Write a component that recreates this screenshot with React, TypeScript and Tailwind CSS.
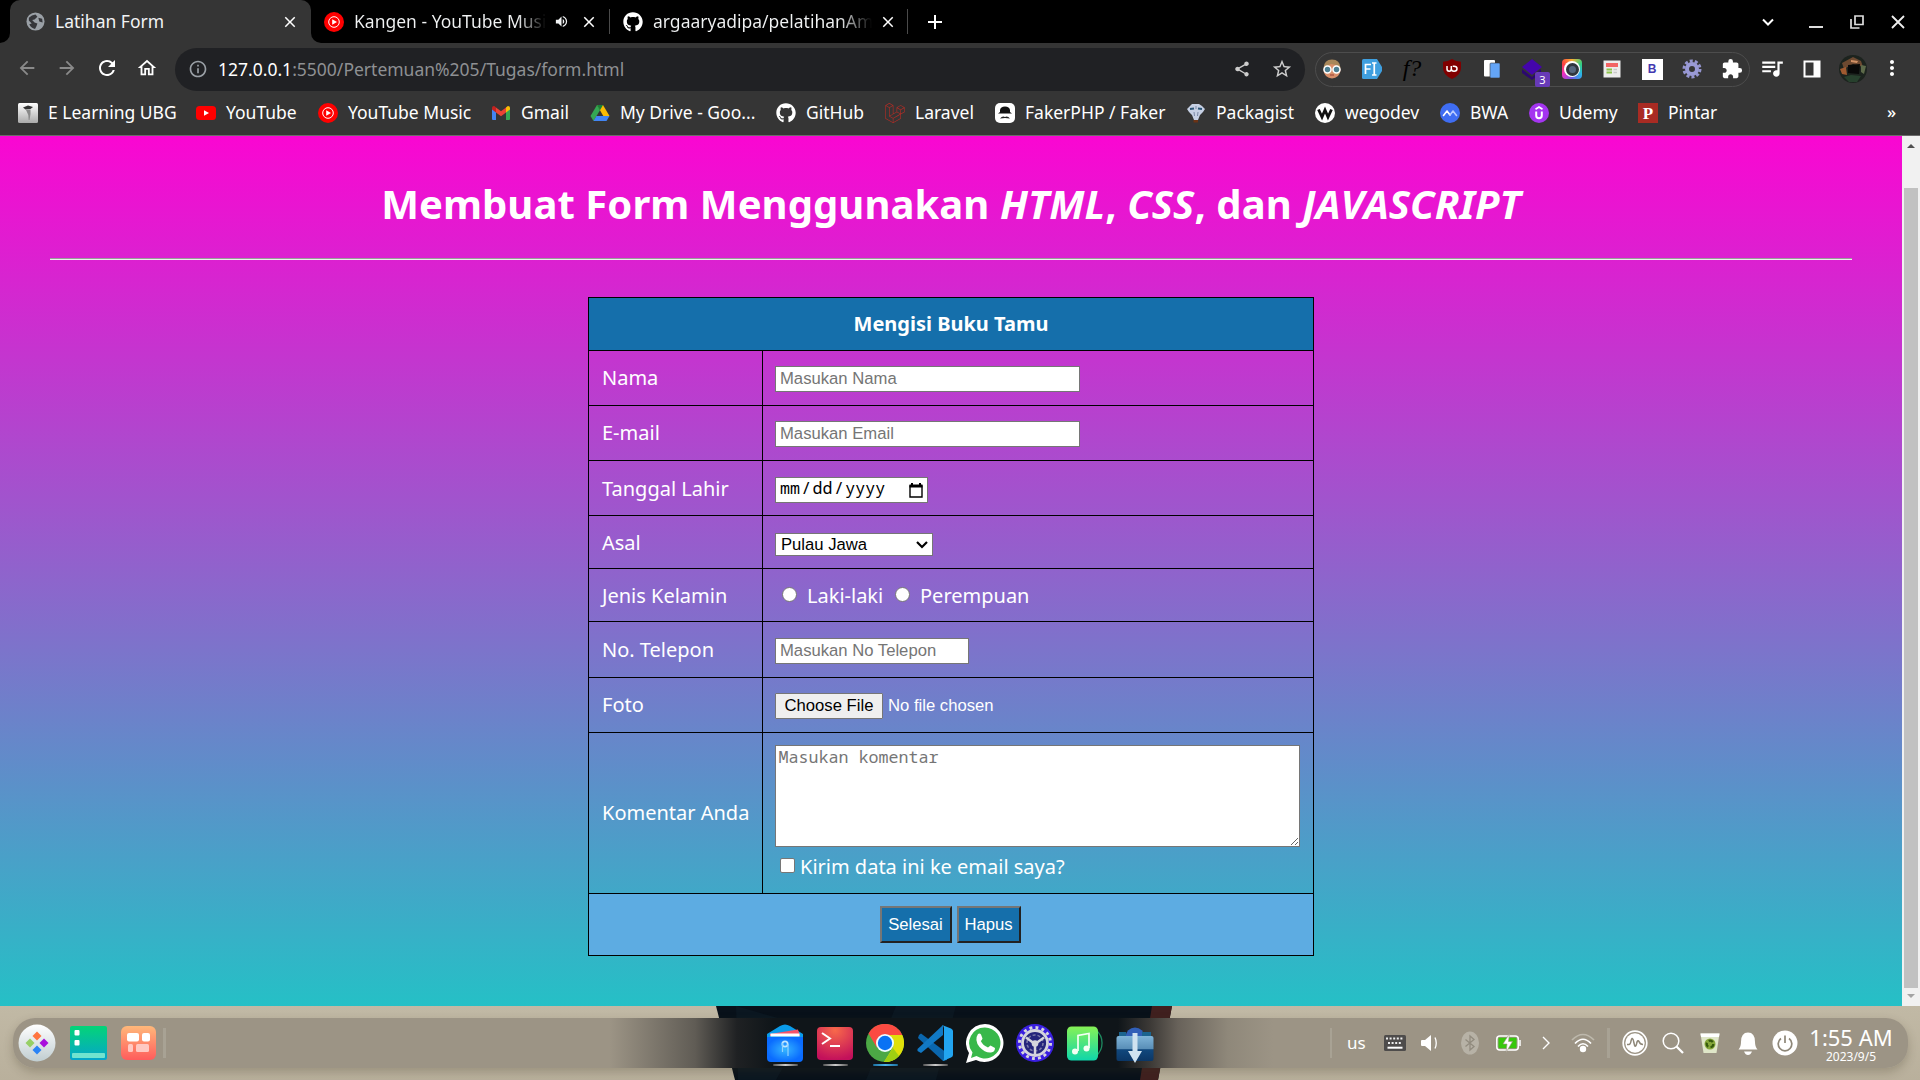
import React from "react";
import {
  MdArrowBack, MdArrowForward, MdRefresh, MdOutlineHome, MdInfoOutline, MdShare, MdStarBorder,
  MdExtension, MdQueueMusic, MdMoreVert, MdVolumeUp, MdClose, MdAdd, MdSettings,
} from "react-icons/md";
import { FaGithub, FaLaravel } from "react-icons/fa";

const GlobeIcon = () => (
  <svg viewBox="0 0 20 20" className="size-[19px]">
    <circle cx="10" cy="10" r="9.5" fill="#9aa0a6" />
    <path d="M3 6 Q6 3 10 2.500 L12 5 L9 8 L6.500 8.500 L9 11 L12 12 L11 15 L9.500 18 Q5 17 3.500 13 L6 12 L3 9Z M13 6 L17 7 L17.500 11 L14 10Z" fill="#35363a" />
  </svg>
);
const YTMusic = () => (
  <svg viewBox="0 0 20 20" className="size-[20px]">
    <circle cx="10" cy="10" r="10" fill="#f00" />
    <circle cx="10" cy="10" r="5.300" fill="none" stroke="#fff" strokeWidth="1" />
    <path d="M8.200 7.200 L13 10 L8.200 12.800Z" fill="#fff" />
  </svg>
);
const YouTube = () => (
  <svg viewBox="0 0 20 20" className="size-[20px]">
    <rect x="0" y="3" width="20" height="14" rx="3.500" fill="#f00" />
    <path d="M8 7.200 L13 10 L8 12.800Z" fill="#fff" />
  </svg>
);
const ELearning = () => (
  <svg viewBox="0 0 20 20" className="size-[20px]">
    <defs>
      <linearGradient id="elg" x1="0" y1="0" x2="0" y2="1"><stop offset="0" stopColor="#fff" /><stop offset="1" stopColor="#aaa" /></linearGradient>
    </defs>
    <rect width="20" height="20" rx="1.500" fill="url(#elg)" />
    <path d="M5 4.500 L10 2.500 L15 4 L12.500 6 L7.500 6.500Z" fill="#333" />
    <path d="M8 7 L12.500 6.500 L12.500 11 L11.500 17 L10.700 17 L10.300 12Z" fill="#888" />
  </svg>
);
const Gmail = () => (
  <svg viewBox="0 0 20 20" className="size-[20px]">
    <path d="M1 16 V5 L5 8 V17 H2 Q1 17 1 16Z" fill="#4285f4" />
    <path d="M19 16 V5 L15 8 V17 H18 Q19 17 19 16Z" fill="#34a853" />
    <path d="M5 9.500 V4.500 L10 8.300 L15 4.500 V9.500 L10 13.200Z" fill="#ea4335" />
    <path d="M1 6.500 V5 Q1 3 3 3 Q3.700 3 5 4.500 V9.500Z" fill="#c5221f" />
    <path d="M19 6.500 V5 Q19 3 17 3 Q16.300 3 15 4.500 V9.500Z" fill="#fbbc04" />
  </svg>
);
const Drive = () => (
  <svg viewBox="0 0 20 20" className="size-[20px]">
    <path d="M7 2 H13 L19.500 13 H13.300Z" fill="#fbbc04" />
    <path d="M7 2 L10 7.200 L3.500 18 L0.500 13Z" fill="#34a853" />
    <path d="M6.400 13 H19.500 L16.500 18 H3.500Z" fill="#4285f4" />
    <path d="M7 2 H13 L10 7.200Z" fill="#188038" />
  </svg>
);
const Faker = () => (
  <svg viewBox="0 0 20 20" className="size-[20px]">
    <rect width="20" height="20" rx="5" fill="#fff" />
    <path d="M5 9 V7 Q5.500 3.500 10 3.500 Q14.500 3.500 15 7 V9 L17 10.500 H3Z" fill="#111" />
    <path d="M5 15.500 Q7.500 12.500 10 14 Q12.500 12.500 15 15.500 Q12 15 10 15 Q8 15 5 15.500Z" fill="#222" />
  </svg>
);
const Packagist = () => (
  <svg viewBox="0 0 20 20" className="size-[20px]">
    <path d="M1 6 L4 3 L6 1 L13 1 L16 3 L19 6 L17 9 L14 12 L12 17 H8 L6 12 L3 9Z" fill="#c6d0e4" />
    <path d="M4 6 L8 5.500 M12 5.500 L16 6" stroke="#2b5575" strokeWidth="2" fill="none" />
    <path d="M8 9 L8.500 13 M12 9 L11.500 13 M10 3 V6" stroke="#7c89a6" strokeWidth="1" fill="none" />
    <path d="M7.500 17 H12 V19.500 H7.500Z" fill="#6b3315" />
  </svg>
);
const Wegodev = () => (
  <svg viewBox="0 0 20 20" className="size-[20px]">
    <circle cx="10" cy="10" r="10" fill="#fff" />
    <path d="M3.500 6.500 L7 14 L10 7 L13 14 L16.500 6.500" stroke="#111" strokeWidth="2.800" fill="none" />
  </svg>
);
const Bwa = () => (
  <svg viewBox="0 0 20 20" className="size-[20px]">
    <circle cx="10" cy="10" r="10" fill="#3f6df2" />
    <path d="M3.500 12.500 L7 8 L10 12 " stroke="#fff" strokeWidth="1.600" fill="none" strokeLinecap="round" strokeLinejoin="round" />
    <path d="M10 12 L13 8 L16.500 12.500" stroke="#b8cbff" strokeWidth="1.600" fill="none" strokeLinecap="round" strokeLinejoin="round" />
  </svg>
);
const Udemy = () => (
  <svg viewBox="0 0 20 20" className="size-[20px]">
    <circle cx="10" cy="10" r="10" fill="#a435f0" />
    <path d="M6.500 6.200 L10 4 L13.500 6.200" stroke="#fff" strokeWidth="1.700" fill="none" />
    <path d="M7.200 8.500 V12.500 Q7.200 15.300 10 15.300 Q12.800 15.300 12.800 12.500 V8.500" stroke="#fff" strokeWidth="2" fill="none" />
  </svg>
);
const Pintar = () => (
  <span className="flex size-[20px] items-center justify-center bg-[#a92b23] font-['Liberation_Serif',serif] text-[17px] font-bold leading-none text-white">P</span>
);

const bookmarks: { label: string; slot: string; icon: React.ReactNode }[] = [
  { label: "E Learning UBG", slot: "w-[178px]", icon: <ELearning /> },
  { label: "YouTube", slot: "w-[122px]", icon: <YouTube /> },
  { label: "YouTube Music", slot: "w-[173px]", icon: <YTMusic /> },
  { label: "Gmail", slot: "w-[99px]", icon: <Gmail /> },
  { label: "My Drive - Goo...", slot: "w-[186px]", icon: <Drive /> },
  { label: "GitHub", slot: "w-[109px]", icon: <FaGithub className="size-[20px]" /> },
  { label: "Laravel", slot: "w-[110px]", icon: <FaLaravel className="size-[20px] text-[#b32d26]" /> },
  { label: "FakerPHP / Faker", slot: "w-[191px]", icon: <Faker /> },
  { label: "Packagist", slot: "w-[129px]", icon: <Packagist /> },
  { label: "wegodev", slot: "w-[125px]", icon: <Wegodev /> },
  { label: "BWA", slot: "w-[89px]", icon: <Bwa /> },
  { label: "Udemy", slot: "w-[109px]", icon: <Udemy /> },
  { label: "Pintar", slot: "w-[100px]", icon: <Pintar /> },
];

const extensions: React.ReactNode[] = [
  <svg viewBox="0 0 20 20" className="size-5">
    <circle cx="10" cy="11" r="8.500" fill="#d98f6a" />
    <path d="M1.500 9 Q2 0.500 10 0.500 Q18 0.500 18.500 9 L14 6 L9 5 L5 7Z" fill="#a8875a" />
    <circle cx="5.500" cy="10.500" r="3.500" fill="#4c7f92" stroke="#fff" strokeWidth="1.500" />
    <circle cx="14.500" cy="10.500" r="3.500" fill="#4c7f92" stroke="#fff" strokeWidth="1.500" />
    <path d="M8 16 H12" stroke="#a34b3d" strokeWidth="1.200" />
  </svg>,
  <svg viewBox="0 0 20 20" className="size-5">
    <path d="M1.500 0 H15 L20 8 V12 L15 20 H1.500 Q0 20 0 18.500 V1.500 Q0 0 1.500 0Z" fill="#3f9fdf" />
    <path d="M3.500 15 V5.500 H9 M3.500 10 H8.500 M10 4 H14.500 M12.250 4 V16 M10 16 H14.500" stroke="#fff" strokeWidth="1.700" fill="none" />
  </svg>,
  <span className="-mt-[2px] font-['Liberation_Serif',serif] text-[24px] italic leading-none text-black">f?</span>,
  <svg viewBox="0 0 20 20" className="size-5">
    <path d="M10 0 Q14 2.500 19 2.800 V9 Q19 16 10 20 Q1 16 1 9 V2.800 Q6 2.500 10 0Z" fill="#800000" />
    <path d="M5 7 V10 Q5 12.200 7.200 12.200 Q9.300 12.200 9.300 10 V7 M10.700 7.200 H12 Q15 7.200 15 9.700 Q15 12.200 12 12.200 Q9.300 12.200 9.300 10" stroke="#fff" strokeWidth="1.500" fill="none" />
  </svg>,
  <svg viewBox="0 0 20 20" className="size-5">
    <rect x="2" y="1" width="11" height="16.500" rx="1" fill="#fff" />
    <rect x="8" y="4" width="10" height="15" rx="1" fill="#64a5f7" stroke="#35363a" strokeWidth="0.600" />
  </svg>,
  <svg viewBox="0 0 28 28" className="size-7">
    <path d="M4 14 L14 22 L23 14 V18 L14 25 L4 18Z" fill="#2c0770" />
    <path d="M14 4 L24 12 L14 20 L4 12Z" fill="#4405ab" />
  </svg>,
  <span className="flex size-5 items-center justify-center rounded-[4px] bg-[conic-gradient(#f9b233,#35d07f,#2bb5e8,#6c5ce7,#ee2fc2,#ff4040,#f9b233)]">
    <span className="flex size-4 items-center justify-center rounded-full bg-white">
      <span className="size-[13px] rounded-full border-[3px] border-[#30363d] bg-[#55677d]" />
    </span>
  </span>,
  <svg viewBox="0 0 20 20" className="size-5">
    <rect x="1.500" y="1.500" width="17" height="17" fill="#ececec" />
    <rect x="4" y="4" width="12" height="4" fill="#f26464" />
    <path d="M4.500 10.500 H10 M4.500 13.500 H10" stroke="#8bc34a" strokeWidth="1.800" />
    <path d="M11.500 10.500 H15 M11.500 13.500 H15" stroke="#c9c9c9" strokeWidth="1.500" />
  </svg>,
  <span className="flex size-[21px] items-center justify-center bg-white font-['Liberation_Sans',sans-serif] text-[12px] font-bold leading-none text-[#4338b0]">B</span>,
  <svg viewBox="0 0 20 20" className="size-5">
    <circle cx="10" cy="10" r="8" fill="none" stroke="#9595cf" strokeWidth="3" strokeDasharray="3 2.030" />
    <circle cx="10" cy="10" r="5" fill="none" stroke="#9a9ad6" strokeWidth="4" />
  </svg>,
  <MdExtension className="size-[22px] text-white" />,
];

function TabStrip() {
  return (
    <div className="flex h-[43px] bg-black text-[17.5px] text-[#f1f3f4]">
      <div className="flex w-[10px] bg-[#353535]"><div className="w-full rounded-br-[10px] bg-black" /></div>
      <div className="flex w-[301px] items-center rounded-t-[10px] bg-[#353535] pl-[16px]">
        <GlobeIcon />
        <span className="ml-[10px] w-[226px] whitespace-nowrap">Latihan Form</span>
        <MdClose className="size-[18px] text-white" />
      </div>
      <div className="flex w-[10px] bg-[#353535]"><div className="w-full rounded-bl-[10px] bg-black" /></div>
      <div className="flex w-[288px] items-center pl-[3px]">
        <YTMusic />
        <span className="ml-[10px] w-[192px] overflow-hidden whitespace-nowrap bg-[linear-gradient(90deg,#f1f3f4_85%,transparent_100%)] bg-clip-text text-transparent">Kangen - YouTube Music</span>
        <MdVolumeUp className="ml-[8px] size-[15px]" />
        <MdClose className="ml-[11px] size-[18px] text-white" />
      </div>
      <div className="mt-[9px] h-[25px] w-px bg-[#4a4a4a]" />
      <div className="flex w-[297px] items-center pl-[13px]">
        <FaGithub className="size-[20px] text-white" />
        <span className="ml-[10px] w-[219px] overflow-hidden whitespace-nowrap bg-[linear-gradient(90deg,#f1f3f4_85%,transparent_100%)] bg-clip-text text-transparent">argaaryadipa/pelatihanAmikom</span>
        <MdClose className="ml-[7px] size-[18px] text-white" />
      </div>
      <div className="mt-[9px] h-[25px] w-px bg-[#4a4a4a]" />
      <div className="flex flex-1 items-center pl-[15px]"><MdAdd className="size-[24px] text-white" /></div>
      <div className="flex items-center pr-[14px]">
        <svg viewBox="0 0 12 12" className="size-3"><path d="M1 3.500 L6 8.500 L11 3.500" stroke="#fff" strokeWidth="2" fill="none" /></svg>
        <svg viewBox="0 0 16 16" className="ml-[34px] size-4"><path d="M1 13 H15" stroke="#ddd" strokeWidth="2" /></svg>
        <svg viewBox="0 0 16 16" className="ml-[25px] size-4"><path d="M6 2 H14 V10.500 H6Z M2 5 V14 H10.500" stroke="#ddd" strokeWidth="1.700" fill="none" /></svg>
        <svg viewBox="0 0 16 16" className="ml-[25px] size-4"><path d="M2 2 L14 14 M14 2 L2 14" stroke="#eee" strokeWidth="1.800" /></svg>
      </div>
    </div>
  );
}

function Toolbar() {
  return (
    <div className="flex h-[53px] items-center pb-[1px] text-white">
      <div className="grid w-[168px] grid-cols-[40px_40px_40px_40px] place-items-center pb-[2px] pl-[7px]">
        <MdArrowBack className="size-[22px] text-[#8a8a8a]" />
        <MdArrowForward className="size-[22px] text-[#8a8a8a]" />
        <MdRefresh className="size-[24px]" />
        <MdOutlineHome className="size-[22px]" />
      </div>
      <div className="ml-[7px] flex h-[43px] w-[1130px] items-center rounded-full bg-[#202124] pl-[13px] pr-[12px] text-[17.5px]">
        <MdInfoOutline className="size-[20px] text-[#9aa0a6]" />
        <span className="ml-[10px] flex-1 whitespace-nowrap text-[#8e9093]"><span className="text-white">127.0.0.1</span>:5500/Pertemuan%205/Tugas/form.html</span>
        <MdShare className="size-[18px] text-[#cdcdcd]" />
        <MdStarBorder className="ml-[20px] size-[22px] text-[#cdcdcd]" />
      </div>
      <div className="relative ml-[10px] grid h-[35px] w-[435px] grid-cols-[repeat(11,40px)] place-items-center rounded-full border border-[#4d4d4d]">
        {extensions.map((icon, i) => (
          <span key={i} className="-ml-[8px] flex size-7 items-center justify-center">{icon}</span>
        ))}
        <span className="absolute left-[219px] top-[19px] flex size-[15px] items-center justify-center rounded-[2px] bg-[#673ab7] text-[11px] leading-none">3</span>
      </div>
      <div className="ml-[2px] grid grid-cols-[40px_40px_40px_40px] place-items-center">
        <MdQueueMusic className="mb-[2px] size-[26px]" />
        <svg viewBox="0 0 20 20" className="mb-[1px] size-5"><path d="M2.500 2.500 H17.500 V17.500 H2.500Z" fill="none" stroke="#fff" strokeWidth="2" /><path d="M11.500 2 H18 V18 H11.500Z" fill="#fff" /></svg>
        <svg viewBox="0 0 28 28" className="ml-[2px] size-[28px]">
          <circle cx="14" cy="14" r="14" fill="#1c231e" />
          <path d="M3 8 L14 2 L22 6 L24 12 L14 9 L5 14Z" fill="#6d4930" />
          <path d="M1 14 L7 12 L8 20 L3 19Z" fill="#a05a30" />
          <path d="M9 10 L21 9 L20 19 L9 18Z" fill="#080808" />
          <path d="M5 22 L12 20 L22 21 L18 27 L10 27Z" fill="#27402d" />
          <path d="M22 10 L27 11 L25 19 L22 17Z" fill="#5d6a4a" />
          <path d="M12 5 L19 6 L18 8 L12 7Z" fill="#d29165" />
        </svg>
        <MdMoreVert className="mb-[2px] size-[24px]" />
      </div>
    </div>
  );
}

const rowClass = "grid grid-cols-[174px_1fr] border-t border-black";
const labelClass = "flex items-center border-r border-black pl-[13px]";
const inputClass = "block h-[26px] border border-[#767676] bg-white pl-[4px] font-['Liberation_Sans',sans-serif] text-[16.67px] leading-none text-black placeholder:text-[#757575]";

function GuestBook() {
  return (
    <form className="ml-[588px] mt-[37px] w-[726px] border border-black text-[20px] leading-[27px] text-white">
      <div className="flex h-[52px] items-center justify-center bg-[#156fab] pb-[2px] font-bold">Mengisi Buku Tamu</div>
      <div className={rowClass + " h-[55px]"}>
        <div className={labelClass + " pb-[2px]"}>Nama</div>
        <div className="pl-[12px] pt-[15px]"><input className={inputClass + " w-[305px]"} placeholder="Masukan Nama" /></div>
      </div>
      <div className={rowClass + " h-[55px]"}>
        <div className={labelClass + " pb-[2px]"}>E-mail</div>
        <div className="pl-[12px] pt-[15px]"><input className={inputClass + " w-[305px]"} placeholder="Masukan Email" /></div>
      </div>
      <div className={rowClass + " h-[55px]"}>
        <div className={labelClass}>Tanggal Lahir</div>
        <div className="pl-[12px] pt-[16px]">
          <div className="flex h-[26px] w-[153px] items-center justify-between border border-[#767676] bg-white pl-[4px] pr-[4px] font-['Noto_Sans_Mono','DejaVu_Sans_Mono',monospace] text-[16.67px] leading-none text-black">
            <span className="flex pb-[3px]"><span>mm</span><span className="mx-[1.3px]">/</span><span>dd</span><span className="mx-[1.3px]">/</span><span>yyyy</span></span>
            <svg viewBox="0 0 14 15" className="mt-[1px] h-[15px] w-[14px]"><path d="M1 3 H13 V14 H1Z" fill="none" stroke="#000" strokeWidth="1.400" /><path d="M0.500 1.500 H13.500 V4.500 H0.500Z M2 0 H4 V2 H2Z M10 0 H12 V2 H10Z" fill="#000" /></svg>
          </div>
        </div>
      </div>
      <div className={rowClass + " h-[53px]"}>
        <div className={labelClass}>Asal</div>
        <div className="pl-[12px] pt-[17px]">
          <div className="flex h-[23px] w-[158px] items-center justify-between border border-[#767676] bg-white pl-[5px] pr-[4px] pt-[1px] font-['Liberation_Sans',sans-serif] text-[16.67px] leading-none text-black">
            Pulau Jawa
            <svg viewBox="0 0 12 8" className="h-[8px] w-[12px]"><path d="M1 1 L6 6 L11 1" stroke="#000" strokeWidth="2.200" fill="none" /></svg>
          </div>
        </div>
      </div>
      <div className={rowClass + " h-[53px]"}>
        <div className={labelClass}>Jenis Kelamin</div>
        <div className="flex items-center pl-[19px]">
          <span className="mb-[2px] size-[15px] rounded-full border border-[#767676] bg-white" />
          <span className="ml-[10px] w-[79px] whitespace-nowrap">Laki-laki</span>
          <span className="mb-[2px] ml-[9px] size-[15px] rounded-full border border-[#767676] bg-white" />
          <span className="ml-[10px]">Perempuan</span>
        </div>
      </div>
      <div className={rowClass + " h-[56px]"}>
        <div className={labelClass}>No. Telepon</div>
        <div className="pl-[12px] pt-[16px]"><input className={inputClass + " w-[194px]"} placeholder="Masukan No Telepon" /></div>
      </div>
      <div className={rowClass + " h-[55px]"}>
        <div className={labelClass + " pb-[2px]"}>Foto</div>
        <div className="flex pl-[12px] pt-[15px] font-['Liberation_Sans',sans-serif] text-[16.67px]">
          <span className="flex h-[26px] w-[108px] items-center justify-center rounded-[1px] border border-[#767676] bg-[#efefef] leading-none text-black">Choose File</span>
          <span className="ml-[5px] leading-[25px]">No file chosen</span>
        </div>
      </div>
      <div className={rowClass + " h-[161px]"}>
        <div className={labelClass + " pb-[2px]"}>Komentar Anda</div>
        <div className="pl-[12px] pt-[12px]">
          <textarea className="block h-[102px] w-[525px] resize border border-[#767676] bg-white px-[2.500px] font-['Noto_Sans_Mono','DejaVu_Sans_Mono',monospace] text-[16.67px] leading-[21px] placeholder:text-[#757575]" placeholder="Masukan komentar" />
          <div className="mt-[6px] flex items-center pl-[5px]">
            <span className="mb-[2px] size-[15px] rounded-[2px] border border-[#767676] bg-white" />
            <span className="ml-[5px]">Kirim data ini ke email saya?</span>
          </div>
        </div>
      </div>
      <div className="flex h-[62px] justify-center gap-[5px] border-t border-black bg-[#5dace2] pr-[2px] pt-[12px] font-['Liberation_Sans',sans-serif] text-[16.67px] leading-none">
        <button type="button" className="h-[37px] w-[72px] border-2 border-b-[#222] border-l-[#767676] border-r-[#222] border-t-[#767676] bg-[#156fab] pt-[2px]">Selesai</button>
        <button type="button" className="h-[37px] w-[64px] border-2 border-b-[#222] border-l-[#767676] border-r-[#222] border-t-[#767676] bg-[#156fab] pt-[2px]">Hapus</button>
      </div>
    </form>
  );
}

const dockApps: { icon: React.ReactNode; mark: string }[] = [
  {
    mark: "bg-[linear-gradient(90deg,#555,#ccc,#555)]",
    icon: (
      <svg viewBox="0 0 38 40" className="h-[40px] w-[38px]">
        <defs><radialGradient id="files"><stop offset="0" stopColor="#35b5ff" /><stop offset="1" stopColor="#0a6cff" /></radialGradient></defs>
        <path d="M1 10 L14 2 Q19 -1 24 2 L37 10 V16 H1Z" fill="#0a9bea" />
        <path d="M4 10 L32 5.500 L34 12 H4Z" fill="#f6536b" />
        <path d="M1 13 H37 V34 Q37 38 33 38 H5 Q1 38 1 34Z" fill="url(#files)" />
        <rect x="4.500" y="9.500" width="29" height="3" fill="#fff" />
        <circle cx="19" cy="20" r="2.700" fill="none" stroke="#bfe6ff" strokeWidth="1.700" />
        <path d="M16.500 19 V28 M22 20 V32" stroke="#8fd3ff" strokeWidth="1.200" />
      </svg>
    ),
  },
  {
    mark: "bg-[linear-gradient(90deg,#555,#ccc,#555)]",
    icon: (
      <svg viewBox="0 0 38 40" className="h-[40px] w-[38px]">
        <defs><radialGradient id="term" cx="0.5" cy="0.1" r="0.9"><stop offset="0" stopColor="#f8694a" /><stop offset="1" stopColor="#c3105b" /></radialGradient></defs>
        <rect x="1" y="3" width="36" height="33" rx="4" fill="url(#term)" />
        <path d="M6 9 L14 14.500 L6 20 M14 22 H24" stroke="#fff" strokeWidth="2" fill="none" />
      </svg>
    ),
  },
  {
    mark: "bg-[linear-gradient(90deg,#1c6f9f,#4ab4ea,#1c6f9f)]",
    icon: (
      <svg viewBox="0 0 38 40" className="h-[40px] w-[38px]">
        <circle cx="19" cy="19" r="19" fill="#4ca845" />
        <path d="M2.500 9.500 A19 19 0 0 1 36.300 11 H19 L10.800 23.500Z" fill="#fb4b42" />
        <path d="M36.300 11 A19 19 0 0 1 18 38 L27 23.500 Q29 16 22 11Z" fill="#e0e00a" />
        <path d="M27 24 L18 38 Q28 38 33 32Z" fill="#9fd012" />
        <circle cx="19" cy="19" r="9" fill="#eefcff" />
        <circle cx="19" cy="19" r="7.200" fill="#0a72f4" />
      </svg>
    ),
  },
  {
    mark: "bg-[linear-gradient(90deg,#555,#ccc,#555)]",
    icon: (
      <svg viewBox="0 0 38 40" className="h-[40px] w-[38px]">
        <path d="M3 11 L5 9.500 L31 29 V36 L27 37 L2 14Z" fill="#0a66ad" />
        <path d="M27 1 V11 L5 29 L1.500 27 V25Z" fill="#1179c5" />
        <path d="M26 1 L35 4.500 Q37 5.500 37 7 V31 Q37 32.500 35 33.500 L27 37 Q28 36 28 34 V4 Q28 2 26 1Z" fill="#22a5f1" />
      </svg>
    ),
  },
  {
    mark: "bg-transparent",
    icon: (
      <svg viewBox="0 0 38 40" className="h-[40px] w-[38px]">
        <path d="M19 0 A19 19 0 1 1 10 36 L0 39 L3 29 A19 19 0 0 1 19 0Z" fill="#fff" />
        <path d="M19 3.500 A15.500 15.500 0 1 1 10.500 32 L5 34 L6.500 28.500 A15.500 15.500 0 0 1 19 3.500Z" fill="#38b84a" />
        <path d="M12 10 Q14 9 15 10.500 L16.500 14.500 Q16 16 14.800 17 Q17 21.500 22 23.500 L24.500 21.500 L29 24 Q29 28 25 28.500 Q19 29 13.500 23 Q8 16 12 10Z" fill="#fff" />
      </svg>
    ),
  },
  {
    mark: "bg-transparent",
    icon: (
      <svg viewBox="0 0 38 40" className="h-[40px] w-[38px]">
        <circle cx="19" cy="19" r="19" fill="#3a1fe0" />
        <circle cx="19" cy="19" r="15.500" fill="none" stroke="#d5d5dd" strokeWidth="3" strokeDasharray="2.900 3.190" />
        <circle cx="19" cy="19" r="12.500" fill="#25257c" stroke="#d5d5dd" strokeWidth="2.800" />
        <circle cx="19" cy="19" r="8" fill="none" stroke="#7c7ca8" strokeWidth="1.500" strokeDasharray="3 2" />
        <path d="M19 20 V31 M19 20 L10 13.500 M19 20 L28 13.500" stroke="#d5d5dd" strokeWidth="2.500" />
        <circle cx="19" cy="19.500" r="3.300" fill="#d5d5dd" />
      </svg>
    ),
  },
  {
    mark: "bg-transparent",
    icon: (
      <svg viewBox="0 0 38 40" className="h-[40px] w-[38px]">
        <defs><linearGradient id="music" x1="0" y1="0" x2="0" y2="1"><stop offset="0" stopColor="#86f255" /><stop offset="1" stopColor="#0fd6ab" /></linearGradient></defs>
        <path d="M30 6 A17 17 0 0 1 30 32" fill="none" stroke="#1d8a60" strokeWidth="1.300" />
        <rect x="1" y="2.500" width="31" height="34" rx="4.500" fill="url(#music)" />
        <path d="M12 27 V11.500 L23 9.500 V24" stroke="#f4fff4" strokeWidth="1.700" fill="none" />
        <circle cx="9" cy="27.500" r="3" fill="#f4fff4" /><circle cx="20.500" cy="24.500" r="3" fill="#f4fff4" />
      </svg>
    ),
  },
  {
    mark: "bg-transparent",
    icon: (
      <svg viewBox="0 0 38 40" className="h-[40px] w-[38px]">
        <defs><linearGradient id="down" x1="0" y1="0" x2="0" y2="1"><stop offset="0" stopColor="#7fb4d8" /><stop offset="0.500" stopColor="#5a8fb8" /><stop offset="0.550" stopColor="#11487d" /><stop offset="1" stopColor="#0b3766" /></linearGradient></defs>
        <circle cx="19" cy="13" r="9.500" fill="#315fb8" />
        <path d="M3 8 H10 V14 H3Z M26 8 H35 V14 H26Z" fill="#1b648f" />
        <rect x="0.500" y="12" width="37" height="25" rx="2" fill="url(#down)" />
        <path d="M16.500 9 H21.500 V27 H26 L19 39 L12 27 H16.500Z" fill="#cfe2f0" />
      </svg>
    ),
  },
];

function Dock() {
  return (
    <div className="relative h-[74px] overflow-hidden bg-[linear-gradient(#c1b9a5,#b9b09c)]">
      <svg viewBox="0 0 456 74" className="absolute left-[716px] top-0 h-[74px] w-[456px]">
        <path d="M0 0 H456 L442 74 H19Z" fill="#08111a" />
        <path d="M436 0 H456 L442 74 H424Z" fill="#40201f" />
        <path d="M20 0 L90 20 L60 74 H22Z M180 0 L240 0 L220 74 H150Z" fill="#0b1721" />
      </svg>
      <div className="relative ml-[13px] mt-[12px] flex h-[50px] w-[1895px] items-center rounded-[22px] bg-[linear-gradient(90deg,#9c9485_597px,#605c55_682px,#1f2123_724px,#0f1519_760px,#0f1519_1105px,#3c3936_1137px,#68625a_1165px,#8f887a_1215px,#9c9485_1260px)] shadow-[0_4px_10px_rgba(60,50,30,0.25)]">
        <svg viewBox="0 0 38 38" className="ml-[5px] mt-[-1px] size-[38px]">
          <defs><linearGradient id="launch" x1="0" y1="0" x2="0" y2="1"><stop offset="0" stopColor="#fff" /><stop offset="1" stopColor="#c0cdd0" /></linearGradient></defs>
          <circle cx="19" cy="19" r="18.500" fill="url(#launch)" />
          <path d="M19 7.500 L23.500 12 L19 16.500 L14.500 12Z" fill="#ff7540" />
          <path d="M12 14.500 L16.500 19 L12 23.500 L7.500 19Z" fill="#96cf66" />
          <path d="M26 14.500 L30.500 19 L26 23.500 L21.500 19Z" fill="#a90fdc" />
          <path d="M19 21.500 L23.500 26 L19 30.500 L14.500 26Z" fill="#2a83f5" />
        </svg>
        <svg viewBox="0 0 37 35" className="ml-[14px] h-[35px] w-[37px]">
          <defs><linearGradient id="desk" x1="0" y1="0" x2="0" y2="1"><stop offset="0" stopColor="#04d477" /><stop offset="1" stopColor="#05a5cb" /></linearGradient></defs>
          <rect width="37" height="34" rx="2" fill="url(#desk)" />
          <rect x="4.500" y="4" width="5" height="5.500" rx="1" fill="#fff" /><rect x="4.500" y="14" width="5" height="5.500" rx="1" fill="#fff" />
          <rect x="2" y="27" width="33" height="5" rx="1" fill="#70e3cf" />
        </svg>
        <svg viewBox="0 0 36 35" className="ml-[13.500px] h-[35px] w-[36px]">
          <defs><linearGradient id="multi" x1="0" y1="0" x2="0" y2="1"><stop offset="0" stopColor="#ffb87a" /><stop offset="1" stopColor="#ff5c5c" /></linearGradient></defs>
          <rect width="35" height="34" rx="6" fill="url(#multi)" />
          <rect x="6" y="7" width="12" height="8.500" rx="2" fill="#fff" /><rect x="21" y="7" width="8" height="8.500" rx="2" fill="#fff" />
          <rect x="7" y="18" width="5" height="8" rx="1.500" fill="#ffc9c2" /><rect x="15" y="18" width="13" height="8" rx="1.500" fill="#ffc9c2" />
        </svg>
        <span className="ml-[6.500px] h-[30px] w-[3px] bg-[#a8a294]" />
        <div className="ml-[594px] grid h-[50px] grid-cols-[repeat(8,50px)]">
          {dockApps.map((app, i) => (
            <div key={i} className="flex flex-col items-center pt-[6px]">
              {app.icon}
              <span className={"h-[2px] w-[25px] rounded-full " + app.mark} />
            </div>
          ))}
        </div>
        <span className="ml-[170px] h-[30px] w-[2px] bg-[#a8a294]" />
        <div className="flex flex-1 items-center text-white">
          <span className="ml-[15px] w-[24px] text-[17px]">us</span>
          <svg viewBox="0 0 22 16" className="ml-[13px] h-[16px] w-[22px]"><rect width="22" height="16" rx="1.500" fill="#4e4c4b" /><path d="M2 3.500 H20 M4 8 H18" stroke="#eee" strokeWidth="2" strokeDasharray="2 1.600" /><path d="M3.500 12.700 H18.500" stroke="#fff" strokeWidth="2" /></svg>
          <svg viewBox="0 0 17 16" className="ml-[15px] h-[16px] w-[17px]"><path d="M1 5 H4 L10 0 V16 L4 11 H1 Q0 11 0 10 V6 Q0 5 1 5Z" fill="#fff" /><path d="M14 2.500 Q16.500 8 14 13.500" stroke="#fff" strokeWidth="1.300" fill="none" /></svg>
          <svg viewBox="0 0 18 24" className="ml-[23px] h-[24px] w-[18px]"><ellipse cx="9" cy="12" rx="9" ry="11.500" fill="#b7b2a6" /><path d="M4.500 8.500 L13 15.500 L9 19 V5 L13 8.500 L4.500 15.500" stroke="#918b7e" strokeWidth="1.300" fill="none" /></svg>
          <svg viewBox="0 0 25 20" className="ml-[17px] h-[20px] w-[25px]"><rect x="0.800" y="3" width="21.500" height="14" rx="3" fill="none" stroke="#fff" strokeWidth="1.500" /><rect x="2.500" y="4.700" width="18" height="10.600" rx="1" fill="#37c80c" /><path d="M24 7 V13" stroke="#fff" strokeWidth="1.500" /><path d="M13.500 0.500 L7 11 H11 L10 19.500 L16.500 8.500 H12.500Z" fill="#fff" stroke="#9c9485" strokeWidth="0.600" /></svg>
          <svg viewBox="0 0 8 14" className="ml-[21px] h-[14px] w-[8px]"><path d="M1 1 L7 7 L1 13" stroke="#fff" strokeWidth="1.400" fill="none" /></svg>
          <svg viewBox="0 0 24 20" className="ml-[21px] h-[20px] w-[24px]"><path d="M1 7 Q12 -4 23 7" stroke="#bdb8ac" strokeWidth="1.700" fill="none" /><path d="M4 10.500 Q12 2 20 10.500 M7 13.500 Q12 8 17 13.500" stroke="#fff" strokeWidth="1.700" fill="none" /><circle cx="12" cy="16" r="3.200" fill="#fff" /></svg>
          <span className="ml-[12px] h-[30px] w-[3px] bg-[#a8a294]" />
          <svg viewBox="0 0 26 26" className="ml-[12px] size-[26px]"><circle cx="13" cy="13" r="11.800" fill="none" stroke="#fff" strokeWidth="1.700" /><circle cx="13" cy="13" r="9.700" fill="#fff" /><path d="M5 14.500 H7 Q8.500 14.500 9 11 Q10.500 5 12 13 Q13 19 14.500 14 Q15.500 9 17 11.500 Q18 14.500 21 14.500" stroke="#8e8778" strokeWidth="1.500" fill="none" /></svg>
          <svg viewBox="0 0 22 22" className="ml-[14px] size-[22px]"><circle cx="9" cy="9" r="7.800" fill="none" stroke="#fff" strokeWidth="1.500" /><path d="M14.500 14.500 L21 21" stroke="#fff" strokeWidth="2.300" /></svg>
          <svg viewBox="0 0 20 21" className="ml-[16px] h-[21px] w-[20px]"><path d="M0.500 0.500 H19.500 L16.500 20 H3.500Z" fill="#dfe6c8" /><path d="M0.500 0.500 H19.500 L19 4 H1Z" fill="#fff" /><circle cx="10" cy="11" r="5.500" fill="#86a83a" /><circle cx="10" cy="11" r="3.300" fill="none" stroke="#35590c" strokeWidth="2.200" strokeDasharray="4.500 2.400" /></svg>
          <svg viewBox="0 0 20 23" className="ml-[18px] h-[23px] w-[20px]"><path d="M0.500 17.500 Q3 15 3 10 Q3 0.500 10 0.500 Q17 0.500 17 10 Q17 15 19.500 17.500Z M6 19.500 H14 Q12.500 23 10 23 Q7.500 23 6 19.500Z" fill="#fff" /></svg>
          <svg viewBox="0 0 26 26" className="ml-[14px] size-[26px]"><circle cx="13" cy="13" r="12.500" fill="#fff" /><path d="M9 8.500 A6.800 6.800 0 1 0 17 8.500 M13 5.500 V13" stroke="#8e8778" strokeWidth="1.700" fill="none" /></svg>
          <div className="ml-[10px] flex w-[86px] flex-col items-center whitespace-nowrap pt-[3px]">
            <span className="text-[22px] leading-[24px]">1:55 AM</span>
            <span className="text-[12px] leading-[16px]">2023/9/5</span>
          </div>
        </div>
      </div>
    </div>
  );
}

export default function App() {
  return (
    <div className="flex h-[1080px] w-[1920px] flex-col overflow-hidden font-['Noto_Sans',sans-serif]">
      <TabStrip />
      <div className="h-[93px] border-b border-[#6b6b6b] bg-[#353535]">
        <Toolbar />
        <div className="flex h-[34px] items-center pl-[18px] text-[17.5px] text-white">
          {bookmarks.map((b) => (
            <div key={b.label} className={"flex shrink-0 items-center gap-[10px] whitespace-nowrap " + b.slot}>
              {b.icon}
              <span className="-mt-[2px]">{b.label}</span>
            </div>
          ))}
          <span className="-mt-[3px] ml-[149px] text-[17px] font-medium">»</span>
        </div>
      </div>
      <div className="flex h-[870px]">
        <main className="w-[1902px] bg-[linear-gradient(#fa06d2,#25c0c6)]">
          <h1 className="pt-[41px] text-center text-[40px] font-bold leading-[54px] tracking-[0.06px] text-white">
            Membuat Form Menggunakan <i>HTML</i>, <i>CSS</i>, dan <i>JAVASCRIPT</i>
          </h1>
          <hr className="ml-[50px] mt-[27px] h-[2px] w-[1802px] border-b border-t border-b-[#eee] border-t-[#9a9a9a]" />
          <GuestBook />
        </main>
        <div className="flex w-[18px] flex-col items-center bg-[#f1f1f1]">
          <svg viewBox="0 0 8 4" className="mt-[8px] h-[4px] w-[8px]"><path d="M0 4 L4 0 L8 4Z" fill="#505050" /></svg>
          <div className="mt-[40px] h-[800px] w-[14px] bg-[#c1c1c1]" />
          <svg viewBox="0 0 8 4" className="mt-[6px] h-[4px] w-[8px]"><path d="M0 0 H8 L4 4Z" fill="#a3a3a3" /></svg>
        </div>
      </div>
      <Dock />
    </div>
  );
}
